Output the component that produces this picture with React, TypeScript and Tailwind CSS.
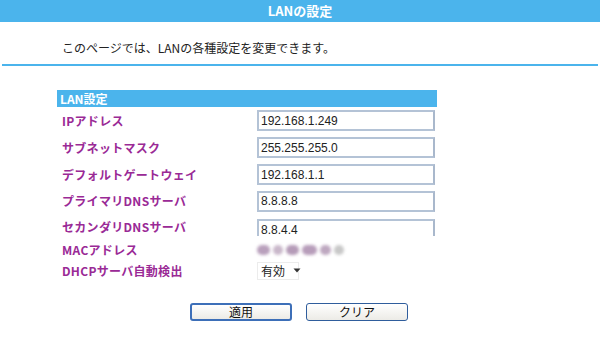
import React from "react";

const jp = { fontFamily: '"Noto Sans CJK JP", "Liberation Sans", sans-serif' };
const num = { fontFamily: '"Liberation Sans", "Noto Sans CJK JP", sans-serif' };

function Row({ label, children, h = "h-[27px]" }: { label: string; children?: React.ReactNode; h?: string }) {
  return (
    <div className={`flex items-center ${h}`}>
      <div className="w-[200px] pl-[5px] text-[12px] font-bold text-[#9a2a96] tracking-[0.3px] whitespace-nowrap" style={jp}>
        {label}
      </div>
      <div className="flex items-center">{children}</div>
    </div>
  );
}

function Field({ value }: { value: string }) {
  return (
    <div
      className="w-[178px] h-[21px] border-2 border-[#b4c3d6] border-r-[#a9b8cc] bg-white flex items-center pl-[2px] text-[12px] text-[#222]"
      style={num}
    >
      {value}
    </div>
  );
}

export default function App() {
  return (
    <div className="w-[600px] h-[337px] bg-white relative overflow-hidden" style={jp}>
      <div className="h-[22px] bg-[#4bb4ec] flex items-center justify-center text-white text-[13px] font-bold">
        LANの設定
      </div>
      <div className="h-[42px] flex items-center pl-[62px] pt-[10px] text-[12px] text-[#222]">
        このページでは、LANの各種設定を変更できます。
      </div>
      <div className="mx-[2px] h-[2px] bg-[#4bb4ec]" />
      <div className="ml-[57px] w-[380px] mt-[24px]">
        <div className="h-[17px] bg-[#4bb4ec] flex items-center pl-[3px] text-white text-[12px] font-bold">
          LAN設定
        </div>
        <Row label="IPアドレス">
          <Field value="192.168.1.249" />
        </Row>
        <Row label="サブネットマスク">
          <Field value="255.255.255.0" />
        </Row>
        <Row label="デフォルトゲートウェイ">
          <Field value="192.168.1.1" />
        </Row>
        <Row label="プライマリDNSサーバ" h="h-[26px]">
          <Field value="8.8.8.8" />
        </Row>
        <Row label="セカンダリDNSサーバ" h="h-[25px]">
          <div className="h-[17px] overflow-hidden self-start mt-[2px]">
            <Field value="8.8.4.4" />
          </div>
        </Row>
        <Row label="MACアドレス" h="h-[21px]">
          <div className="flex items-center gap-[3px] blur-[1.5px]">
            <span className="w-[13px] h-[10px] rounded-full bg-[#b9a0bc]" />
            <span className="w-[10px] h-[10px] rounded-full bg-[#c9b7ca]" />
            <span className="w-[13px] h-[10px] rounded-full bg-[#b59bb8]" />
            <span className="w-[15px] h-[10px] rounded-full bg-[#b79dba]" />
            <span className="w-[11px] h-[10px] rounded-full bg-[#bea8c0]" />
            <span className="w-[10px] h-[10px] rounded-full bg-[#c8c8c8]" />
          </div>
        </Row>
        <Row label="DHCPサーバ自動検出" h="h-[21px]">
          <div className="w-[42px] h-[18px] border border-[#ececec] bg-white flex items-center pl-[3px] text-[12px] text-[#222] whitespace-nowrap">
            <span>有効</span>
            <svg width="8" height="5" viewBox="0 0 8 5" className="ml-[8px] shrink-0">
              <path d="M0.5 0.5 L7.5 0.5 L4 4.5 Z" fill="#333" />
            </svg>
          </div>
        </Row>
      </div>
      <div className="flex justify-center gap-[14px] mt-[22px] pr-[2px]">
        <button
          className="w-[102px] h-[18px] rounded-[3px] border-2 border-[#3d6fb8] bg-gradient-to-b from-[#ffffff] to-[#ecebe6] text-[12px] text-[#111] flex items-center justify-center"
          style={jp}
        >
          適用
        </button>
        <button
          className="w-[102px] h-[18px] rounded-[3px] border border-[#2f5d9c] bg-gradient-to-b from-[#ffffff] to-[#ecebe6] text-[12px] text-[#111] flex items-center justify-center"
          style={jp}
        >
          クリア
        </button>
      </div>
    </div>
  );
}
